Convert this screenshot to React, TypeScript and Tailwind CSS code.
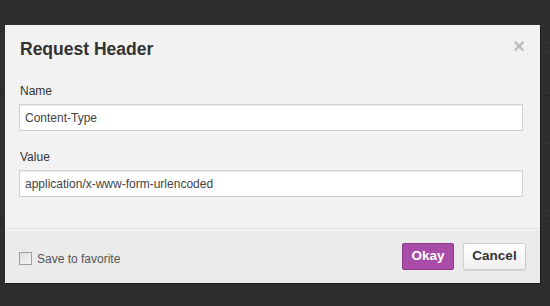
import { useState } from 'react'

export default function App() {
  const [name, setName] = useState('Content-Type')
  const [value, setValue] = useState('application/x-www-form-urlencoded')

  return (
    <div
      className="relative h-[306px] w-[550px] overflow-hidden bg-[#2e2e2e]"
      style={{ fontFamily: '"Liberation Sans", Arial, sans-serif' }}
    >
      {/* faint rows of the page behind the overlay */}
      <div className="absolute inset-x-0 top-[42px] h-px bg-[#353535]" />
      <div className="absolute inset-x-0 top-[52px] h-px bg-[#363636]" />
      <div className="absolute inset-x-0 top-[95px] h-px bg-[#262626]" />
      <div className="absolute inset-x-0 top-[143px] h-px bg-[#353535]" />
      <div className="absolute inset-x-0 top-[210px] h-px bg-[#363636]" />
      <div className="absolute inset-x-0 top-[218px] h-px bg-[#262626]" />

      <div className="absolute left-[5px] top-[25px] flex h-[258px] w-[535px] flex-col bg-[#f2f2f2] shadow-[1px_1px_0_#1a1a1a]">
        <div className="flex items-start justify-between pl-[15px] pr-[15px] pt-[13px]">
          <h2 className="text-[17.5px] font-bold leading-[22px] text-[#333]">Request Header</h2>
          <button className="-mt-[2px] text-[20px] font-bold leading-[20px] text-[#bdbdbd]">×</button>
        </div>

        <div className="flex flex-col pl-[14px] pr-[17px] pt-[23px]">
          <label className="mb-[5px] pl-px text-[12px] leading-[16px] text-[#333]">Name</label>
          <input
            value={name}
            onChange={(e) => setName(e.target.value)}
            className="h-[27px] w-full border border-[#d0d0d0] bg-white px-[5px] text-[12px] text-[#444] shadow-[inset_0_1px_1px_rgba(0,0,0,0.08)] outline-none"
          />
          <label className="mb-[5px] mt-[18px] pl-px text-[12px] leading-[16px] text-[#333]">Value</label>
          <input
            value={value}
            onChange={(e) => setValue(e.target.value)}
            className="h-[27px] w-full border border-[#d0d0d0] bg-white px-[5px] text-[12px] text-[#444] shadow-[inset_0_1px_1px_rgba(0,0,0,0.08)] outline-none"
          />
        </div>

        <div className="mt-auto flex h-[55px] items-center justify-between border-t border-[#dedede] bg-[#ebebeb] pl-[14px] pr-[14px] shadow-[inset_0_1px_0_#f7f7f7]">
          <label className="flex items-center gap-[5px] pt-[5px] text-[12px] text-[#555]">
            <span className="inline-block h-[13px] w-[13px] border border-[#a0a0a0] bg-gradient-to-br from-[#dcdcdc] to-[#f8f8f8]" />
            Save to favorite
          </label>
          <div className="flex gap-[9px]">
            <button className="h-[27px] w-[52px] rounded-[2px] border border-[#8e3a8e] bg-[#a84ca8] text-[13.5px] font-bold text-white">
              Okay
            </button>
            <button className="h-[27px] w-[63px] rounded-[2px] border border-[#cfcfcf] bg-gradient-to-b from-white to-[#f0f0f0] text-[13.5px] font-bold text-[#333] shadow-[0_1px_1px_rgba(0,0,0,0.1)]">
              Cancel
            </button>
          </div>
        </div>
      </div>
    </div>
  )
}
